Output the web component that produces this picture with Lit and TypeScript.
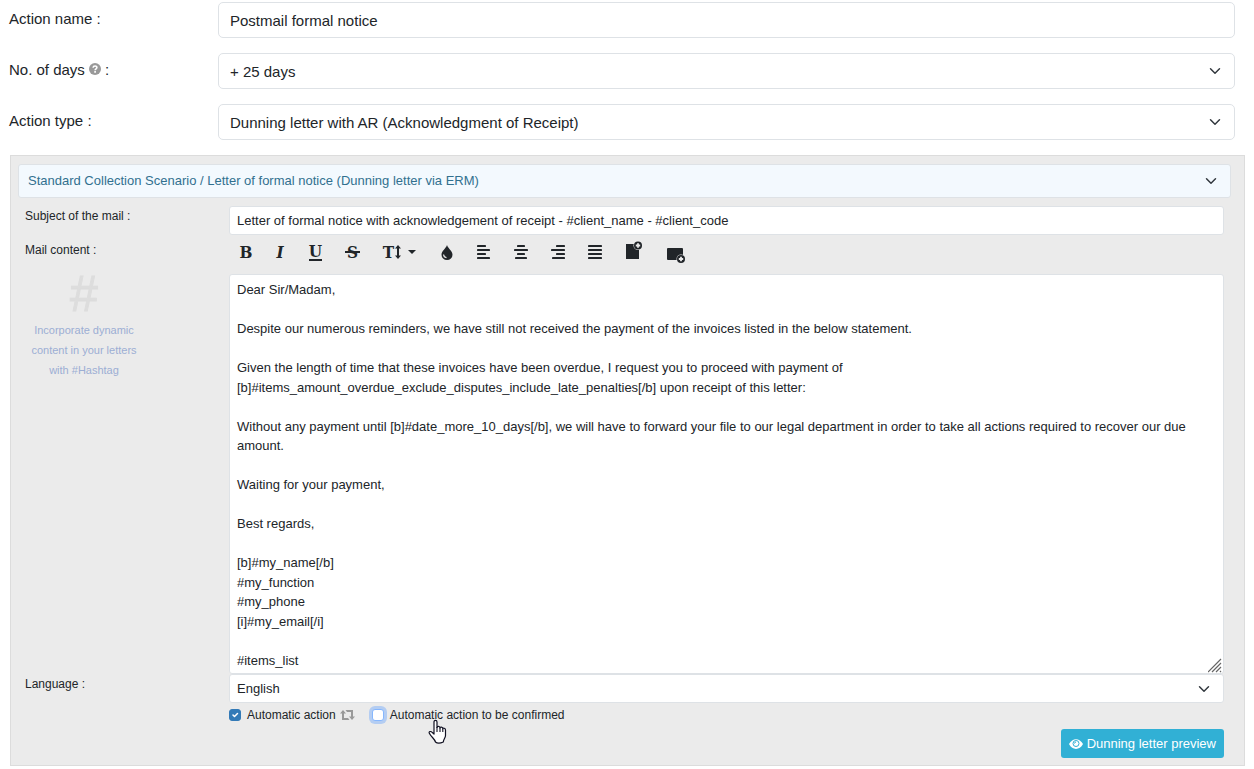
import { LitElement, html, css, svg } from "lit";
import { customElement, state } from "lit/decorators.js";

const LETTER = `Dear Sir/Madam,

Despite our numerous reminders, we have still not received the payment of the invoices listed in the below statement.

Given the length of time that these invoices have been overdue, I request you to proceed with payment of [b]#items_amount_overdue_exclude_disputes_include_late_penalties[/b] upon receipt of this letter:

Without any payment until [b]#date_more_10_days[/b], we will have to forward your file to our legal department in order to take all actions required to recover our due amount.

Waiting for your payment,

Best regards,

[b]#my_name[/b]
#my_function
#my_phone
[i]#my_email[/i]

#items_list`;

// Line spans [start, end] of each paragraph alignment icon.
const ALIGNMENTS = [
  { name: "Align left", lines: [[0, 9], [0, 13], [0, 9], [0, 13]] },
  { name: "Align center", lines: [[3, 11], [0, 14], [3, 11], [1, 13]] },
  { name: "Align right", lines: [[5, 14], [0, 14], [5, 14], [1, 14]] },
  { name: "Justify", lines: [[0, 14], [0, 14], [0, 14], [0, 14]] },
];

@customElement("app-root")
export class AppRoot extends LitElement {
  @state() private automatic = true;
  @state() private confirmed = false;

  static styles = css`
    :host {
      display: block;
      font-family: "Liberation Sans", Arial, sans-serif;
      font-size: 13px;
      color: #212529;
      background: #fff;
    }
    * {
      box-sizing: border-box;
    }
    svg {
      display: block;
      flex: none;
    }
    input,
    select,
    textarea,
    button {
      font: inherit;
      color: inherit;
      margin: 0;
    }
    .general {
      display: grid;
      grid-template-columns: 209px minmax(0, 1fr);
      row-gap: 15px;
      padding: 2px 19px 15px 9px;
      font-size: 15px;
    }
    .general-label {
      display: flex;
      align-items: center;
      gap: 4px;
      height: 32px;
    }
    .field {
      display: block;
      width: 100%;
      height: 29px;
      padding: 0 7px;
      border: 1px solid #dee2e6;
      border-radius: 3px;
      background-color: #fff;
      outline: none;
      appearance: none;
    }
    .general .field {
      height: 36px;
      padding: 0 11px;
      border-radius: 5px;
    }
    .drop {
      background-image: url("data:image/svg+xml,%3Csvg xmlns='http://www.w3.org/2000/svg' viewBox='0 0 16 16'%3E%3Cpath fill='none' stroke='%23343a40' stroke-linecap='round' stroke-linejoin='round' stroke-width='2' d='m2 5 6 6 6-6'/%3E%3C/svg%3E");
      background-repeat: no-repeat;
      background-position: right 13px center;
      background-size: 12px 12px;
    }
    .panel {
      margin: 0 9px 3px 10px;
      padding: 8px 13px 7px 7px;
      border: 1px solid #dcdcdc;
      background: #ebebeb;
    }
    .panel .scenario {
      height: 34px;
      padding: 0 9px 1px;
      color: #31708f;
      background-color: #f3f9fe;
    }
    .mail {
      display: grid;
      grid-template-columns: 204px minmax(0, 1fr);
      padding: 8px 7px 0 7px;
    }
    .small-label {
      display: block;
      padding-top: 3px;
      font-size: 12px;
      line-height: 14px;
      justify-self: start;
      align-self: start;
    }
    .side {
      font-size: 12px;
      line-height: 14px;
      padding-top: 8px;
    }
    .hint {
      width: 118px;
      margin-top: 11px;
      text-align: center;
      font-size: 11px;
      line-height: 20px;
      color: #9caed4;
    }
    .hash {
      font-size: 50px;
      line-height: 52px;
      color: #ddd;
      -webkit-text-stroke: 1px #ddd;
    }
    .hint-text {
      margin: 0;
    }
    .toolbar {
      display: flex;
      height: 39px;
      padding-bottom: 5px;
    }
    .tool {
      display: flex;
      align-items: center;
      justify-content: center;
      width: 37px;
      padding: 0;
      border: 0;
      background: none;
      font-family: "DejaVu Serif Condensed", "DejaVu Serif", serif;
      font-size: 17px;
      font-weight: bold;
      line-height: 20px;
    }
    .narrow {
      width: 34px;
    }
    .wide {
      width: 42px;
    }
    .sizes {
      width: 57px;
      gap: 1px;
    }
    .caret {
      margin-left: 6px;
    }
    .italic {
      font-style: italic;
    }
    .underline {
      border-bottom: 2px solid;
      line-height: 16px;
    }
    .strike {
      padding: 0 2px;
      background: linear-gradient(#212529, #212529) center / 100% 2px no-repeat;
    }
    .letter {
      height: 400px;
      padding: 5px 7px;
      line-height: 1.5;
      overflow: hidden;
      resize: none;
      background-image: url("data:image/svg+xml,%3Csvg xmlns='http://www.w3.org/2000/svg' width='15' height='15'%3E%3Cpath fill='none' stroke='%23666' stroke-width='1.2' d='M0 14 13 1M4 14l9-9M8 14l5-5M12 14l1-1'/%3E%3C/svg%3E");
      background-repeat: no-repeat;
      background-position: right bottom;
    }
    .checks {
      display: flex;
      align-items: center;
      height: 23px;
      font-size: 12px;
    }
    .check {
      position: relative;
      display: flex;
      align-items: center;
      gap: 6px;
    }
    .box {
      appearance: none;
      width: 12px;
      height: 12px;
      border: 1px solid #86b7fe;
      border-radius: 3px;
      background: #fff center / 10px 10px no-repeat;
      outline: none;
    }
    .box:checked {
      border-color: #337ab7;
      background-color: #337ab7;
      background-image: url("data:image/svg+xml,%3Csvg xmlns='http://www.w3.org/2000/svg' viewBox='0 0 20 20'%3E%3Cpath fill='none' stroke='%23fff' stroke-linecap='round' stroke-linejoin='round' stroke-width='3' d='m6 10 3 3 6-6'/%3E%3C/svg%3E");
    }
    .ring {
      box-shadow: 0 0 0 3px #b4cdf2;
    }
    .repeat {
      margin: 0 17px 0 4px;
    }
    .pointer {
      position: absolute;
      left: 56px;
      top: 11px;
      pointer-events: none;
    }
    .actions {
      display: flex;
      justify-content: flex-end;
      padding: 3px 7px 0 0;
    }
    .preview {
      display: flex;
      align-items: center;
      gap: 4px;
      height: 29px;
      padding: 0 8px;
      border: 0;
      border-radius: 3px;
      background: #31b0d5;
      color: #fff;
    }
  `;

  private alignIcon(lines: number[][]) {
    return html`<svg width="14" height="14" viewBox="0 0 14 14" fill="currentColor">
      ${lines.map(([a, b], i) => svg`<rect x=${a} y=${i * 4} width=${b - a} height="2" rx="0.4"/>`)}
    </svg>`;
  }

  render() {
    return html`
      <div class="general">
        <label class="general-label" for="name">Action name :</label>
        <input class="field" id="name" type="text" .value=${"Postmail formal notice"} />
        <label class="general-label" for="days">
          No. of days
          <svg width="12" height="12" viewBox="0 0 12 12">
            <circle cx="6" cy="6" r="6" fill="#999" />
            <path d="M4.1 4.7C4.2 2.5 8 2.5 7.9 4.6 7.9 5.8 6.1 5.8 6.1 7.2" fill="none" stroke="#fff" stroke-width="1.6" />
            <rect x="5.2" y="8.1" width="1.8" height="1.6" fill="#fff" />
          </svg>
          :
        </label>
        <select class="field drop" id="days"><option>+ 25 days</option></select>
        <label class="general-label" for="type">Action type :</label>
        <select class="field drop" id="type">
          <option>Dunning letter with AR (Acknowledgment of Receipt)</option>
        </select>
      </div>

      <div class="panel">
        <select class="field drop scenario" aria-label="Scenario">
          <option>Standard Collection Scenario / Letter of formal notice (Dunning letter via ERM)</option>
        </select>

        <div class="mail">
          <label class="small-label" for="subject">Subject of the mail :</label>
          <input
            class="field"
            id="subject"
            type="text"
            .value=${"Letter of formal notice with acknowledgement of receipt - #client_name - #client_code"}
          />

          <div class="side">
            <label for="content">Mail content :</label>
            <div class="hint">
              <div class="hash">#</div>
              <p class="hint-text">Incorporate dynamic content in your letters with #Hashtag</p>
            </div>
          </div>
          <div>
            <div class="toolbar" role="toolbar" aria-label="Formatting">
              <button class="tool narrow" type="button">B</button>
              <button class="tool narrow italic" type="button">I</button>
              <button class="tool" type="button"><span class="underline">U</span></button>
              <button class="tool" type="button"><span class="strike">S</span></button>
              <button class="tool sizes" type="button" aria-label="Text size">
                T
                <svg width="6" height="14" viewBox="0 0 6 14" fill="currentColor">
                  <path d="M3 0 6 3.6H4v6.8h2L3 14 0 10.400h2V3.600H0z" />
                </svg>
                <svg class="caret" width="8" height="4" viewBox="0 0 8 4" fill="currentColor"><path d="M0 0h8L4 4z" /></svg>
              </button>
              <button class="tool" type="button" aria-label="Colour">
                <svg width="12" height="15" viewBox="0 0 12 15">
                  <path d="M6 0C6.800 3.200 11.500 6 11.500 9.700A5.500 5.300 0 0 1 .5 9.700C.5 6 5.200 3.200 6 0z" fill="currentColor" />
                  <path d="M2.600 9.500C2.700 11.300 3.800 12.500 5.500 12.600" fill="none" stroke="#ebebeb" stroke-width="1.200" />
                </svg>
              </button>
              ${ALIGNMENTS.map(
                (a) => html`<button class="tool" type="button" aria-label=${a.name}>${this.alignIcon(a.lines)}</button>`
              )}
              <button class="tool wide" type="button" aria-label="Add file">
                <svg width="16" height="22" viewBox="0 0 16 22">
                  <path d="M0 3h7v5h6v10H0z" fill="currentColor" />
                  <path d="M7 3h3l3 3v3H7z" fill="currentColor" />
                  <circle cx="12" cy="4.500" r="4.500" fill="#ebebeb" />
                  <circle cx="12" cy="4.500" r="4" fill="currentColor" />
                  <path d="M12 2.300v4.400M9.800 4.500h4.400" stroke="#ebebeb" stroke-width="1.800" />
                </svg>
              </button>
              <button class="tool wide" type="button" aria-label="Add image">
                <svg width="19" height="22" viewBox="0 0 19 22">
                  <rect x="0" y="7" width="16" height="12" rx="1" fill="currentColor" />
                  <circle cx="14" cy="18" r="4.500" fill="#ebebeb" />
                  <circle cx="14" cy="18" r="4" fill="currentColor" />
                  <path d="M14 15.800v4.400M11.800 18h4.400" stroke="#ebebeb" stroke-width="1.800" />
                </svg>
              </button>
            </div>
            <textarea class="field letter" id="content" spellcheck="false" .value=${LETTER}></textarea>
          </div>

          <label class="small-label" for="language">Language :</label>
          <div>
            <select class="field drop" id="language"><option>English</option></select>
            <div class="checks">
              <label class="check">
                <input
                  class="box"
                  type="checkbox"
                  .checked=${this.automatic}
                  @change=${() => (this.automatic = !this.automatic)}
                />
                Automatic action
              </label>
              <svg class="repeat" width="15" height="10" viewBox="0 0 15 10" fill="#999">
                <path d="M3 0 6 3.500H4V8h4l1.500 2H2V3.500H0z" />
                <path d="M12 10 9 6.500h2V2H7L5.500 0H13v6.500h2z" />
              </svg>
              <label class="check">
                <input
                  class="box ring"
                  type="checkbox"
                  .checked=${this.confirmed}
                  @change=${() => (this.confirmed = !this.confirmed)}
                />
                Automatic action to be confirmed
                <svg class="pointer" width="19" height="25" viewBox="0 0 19 25">
                  <path
                    d="M6 13.500V3C6 .7 9 .7 9 3V8.500C9 7 12 7 12 9 12 7.700 14.800 7.800 14.800 9.800 15 8.700 17.500 9 17.500 11V16.500C17.500 19 15.500 20 15.300 23 12 24.500 9 24.300 7.500 23 6.500 19.500 3 18 1.200 14 .7 12.500 2.800 12 4 13.200L6 15z"
                    fill="#fff"
                    stroke="#111122"
                    stroke-width="1.200"
                    stroke-linejoin="round"
                  />
                  <path d="M9 8v5M12 9v4M14.800 10v3" stroke="#111122" stroke-width="1.100" />
                </svg>
              </label>
            </div>
          </div>
        </div>

        <div class="actions">
          <button class="preview" type="button">
            <svg width="14" height="10" viewBox="0 0 14 10">
              <path d="M0 5C3.500-1.500 10.500-1.500 14 5 10.500 11.500 3.500 11.500 0 5z" fill="#fff" />
              <circle cx="7" cy="4.500" r="3" fill="none" stroke="#31b0d5" stroke-width="1" />
              <path d="M5.500 4.500A1.500 1.500 0 0 1 7 3" fill="none" stroke="#31b0d5" stroke-width="1" />
            </svg>
            Dunning letter preview
          </button>
        </div>
      </div>
    `;
  }
}
